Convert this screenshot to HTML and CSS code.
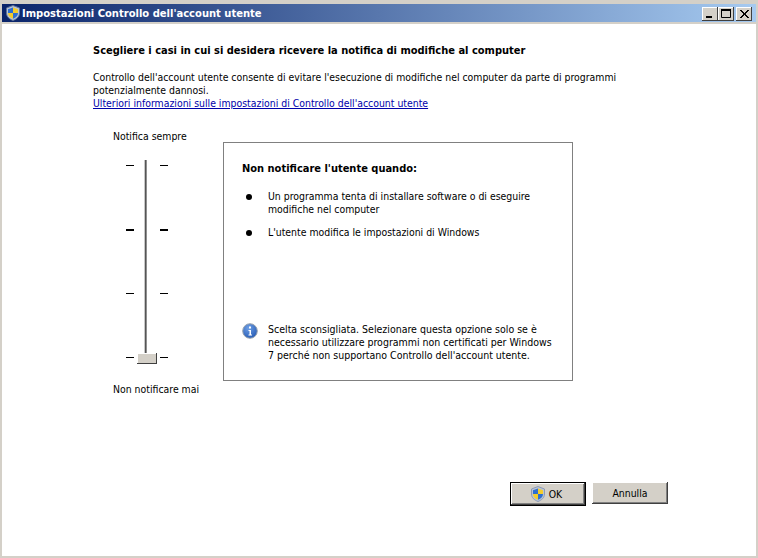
FILE: index.html
```html
<!DOCTYPE html>
<html lang="it">
<head>
<meta charset="utf-8">
<title>Impostazioni Controllo dell'account utente</title>
<link rel="stylesheet" href="styles.css">
</head>
<body>
<div class="window">
  <div class="titlebar">
    <svg class="shield" width="16" height="16" viewBox="0 0 16 16"><path d="M8 .5 14.5 3v5c0 3.800-2.800 6-6.500 7.500C4.300 14 1.500 11.800 1.500 8V3z" fill="#b9c4d6" stroke="#5f7396"/><path d="M8 2.500V8H3v-3.800z" fill="#2f6fd0"/><path d="M8 2.500 13 4.200V8H8z" fill="#f4cd2c"/><path d="M3 8h5v5.700C5 12.600 3 10.800 3 8z" fill="#f4cd2c"/><path d="M8 8h5c0 2.800-2 4.600-5 5.700z" fill="#2f6fd0"/></svg>
    <span class="title">Impostazioni Controllo dell'account utente</span>
    <div class="controls">
      <span class="ctl"><svg width="16" height="14" viewBox="0 0 16 14"><rect x="4" y="9" width="6" height="2" fill="#000"/></svg></span>
      <span class="ctl"><svg width="16" height="14" viewBox="0 0 16 14"><path d="M3.500 2.500h9v8h-9z" fill="none" stroke="#000"/><rect x="3" y="2" width="10" height="2" fill="#000"/></svg></span>
      <span class="ctl close"><svg width="16" height="14" viewBox="0 0 16 14"><path d="m4 3 8 8M5 3l8 8M12 3l-8 8M13 3l-8 8" stroke="#000" fill="none"/></svg></span>
    </div>
  </div>
  <div class="client">
    <h1 class="heading">Scegliere i casi in cui si desidera ricevere la notifica di modifiche al computer</h1>
    <p class="intro">Controllo dell'account utente consente di evitare l'esecuzione di modifiche nel computer da parte di programmi<br>potenzialmente dannosi.<br><a href="#">Ulteriori informazioni sulle impostazioni di Controllo dell'account utente</a></p>
    <div class="main">
      <div class="slider">
        <div class="slider-top">Notifica sempre</div>
        <div class="track-area">
          <div class="tick-col"><i></i><i class="thick"></i><i></i><i></i></div>
          <div class="track"><div class="thumb"></div></div>
          <div class="tick-col"><i></i><i class="thick"></i><i></i><i></i></div>
        </div>
        <div class="slider-bottom">Non notificare mai</div>
      </div>
      <div class="infobox">
        <h2 class="info-title">Non notificare l'utente quando:</h2>
        <ul class="info-list">
          <li><span>Un programma tenta di installare software o di eseguire modifiche nel computer</span></li>
          <li><span>L'utente modifica le impostazioni di Windows</span></li>
        </ul>
        <div class="note">
          <svg class="info-icon" width="16" height="16" viewBox="0 0 16 16"><defs><radialGradient id="ig" cx=".4" cy=".3" r=".8"><stop offset="0" stop-color="#6fa0e6"/><stop offset="1" stop-color="#1f55b0"/></radialGradient></defs><circle cx="8" cy="8" r="7.300" fill="url(#ig)" stroke="#9aa3ad"/><rect x="7" y="3.500" width="2" height="2" fill="#fff"/><path d="M6.500 7H9v4.500h1v1H6.500v-1h1V8h-1z" fill="#fff"/></svg>
          <p class="note-text">Scelta sconsigliata. Selezionare questa opzione solo se è necessario utilizzare programmi non certificati per Windows 7 perché non supportano Controllo dell'account utente.</p>
        </div>
      </div>
    </div>
    <div class="buttons">
      <button class="btn default"><svg width="16" height="16" viewBox="0 0 16 16"><path d="M8 .5 14.500 3v5c0 3.800-2.800 6-6.500 7.500C4.300 14 1.500 11.800 1.500 8V3z" fill="#b9c4d6" stroke="#8b99b3"/><path d="M8 2.500V8H3v-3.800z" fill="#2f6fd0"/><path d="M8 2.500 13 4.200V8H8z" fill="#f4cd2c"/><path d="M3 8h5v5.700C5 12.600 3 10.800 3 8z" fill="#f4cd2c"/><path d="M8 8h5c0 2.800-2 4.600-5 5.700z" fill="#2f6fd0"/></svg>OK</button>
      <button class="btn">Annulla</button>
    </div>
  </div>
</div>
</body>
</html>
```
FILE: styles.css
```css
* { box-sizing: border-box; }
html, body { margin: 0; height: 100%; }
body { font: 10.400px/13px "DejaVu Sans Condensed", "DejaVu Sans", sans-serif; color: #000; background: #d4d0c8; }
.window { height: 558px; padding: 4px 2px 2px; display: flex; flex-direction: column; background: #d4d0c8; }
.titlebar { height: 18px; flex: none; display: flex; align-items: center; padding: 0 4px 0 3px; gap: 1px; background: linear-gradient(90deg, #0a246a, #a6caf0); }
.title { color: #fff; font-weight: bold; font-size: 11.100px; }
.controls { margin-left: auto; display: flex; margin-top: 1px; }
.ctl { width: 16px; height: 14px; background: #d4d0c8; box-shadow: inset -1px -1px #404040, inset 1px 1px #fff; }
.ctl svg { display: block; }
.close { margin-left: 2px; }
.client { flex: 1; background: #fff; margin-top: 2px; padding: 20px 0 0 91px; display: flex; flex-direction: column; }
.heading { margin: 0; font-size: 11px; line-height: 13px; font-weight: bold; }
.intro { margin: 14px 0 0; }
.intro a { color: #00a; }
.main { display: flex; margin-top: 20px; height: 272px; }
.slider { width: 130px; display: flex; flex-direction: column; align-items: flex-start; padding-left: 20px; }
.slider-top { height: 13px; }
.track-area { display: flex; height: 205px; margin-top: 17px; margin-left: 13px; }
.tick-col { width: 8px; display: flex; flex-direction: column; justify-content: space-between; padding: 5px 0 7px; }
.tick-col i { display: block; height: 1px; background: #000; }
.tick-col i.thick { height: 2px; }
.track { width: 3px; margin: 0 13px 0 10px; height: 198px; background: linear-gradient(90deg, #c8c8c8 0 1px, #555 1px 2px, #909090 2px); position: relative; }
.thumb { position: absolute; left: -7px; top: 193px; width: 20px; height: 11px; background: #d4d0c8; box-shadow: inset -1px -1px #404040, inset 1px 1px #fff; }
.slider-bottom { margin-top: 18px; }
.infobox { width: 350px; height: 239px; margin-top: 12px; border: 1px solid #808080; padding: 19px 18px 18px; display: flex; flex-direction: column; }
.info-title { margin: 0; font-size: 11px; line-height: 13px; font-weight: bold; }
.info-list { margin: 15px 0 0; padding: 0; list-style: none; }
.info-list li { margin-bottom: 10px; display: flex; gap: 16px; padding-left: 4px; padding-right: 10px; }
.info-list li::before { content: ""; flex: none; width: 6px; height: 6px; margin-top: 4px; border-radius: 50%; background: #000; }
.note { display: flex; gap: 10px; margin-top: auto; }
.info-icon { flex: none; }
.note-text { margin: 0; width: 290px; font-size: 10.500px; }
.buttons { margin: 80px 0 0 417px; display: flex; gap: 6px; align-items: flex-start; }
.btn { width: 76px; height: 22px; padding: 0; font: inherit; color: #000; background: #d4d0c8; border: none; box-shadow: inset -1px -1px #404040, inset 1px 1px #fff, inset -2px -2px #808080; display: flex; align-items: center; justify-content: center; gap: 3px; }
.btn.default { height: 24px; padding-right: 4px; box-shadow: inset 0 0 0 1px #000, inset -2px -2px #404040, inset 2px 2px #fff, inset -3px -3px #808080; }
```
